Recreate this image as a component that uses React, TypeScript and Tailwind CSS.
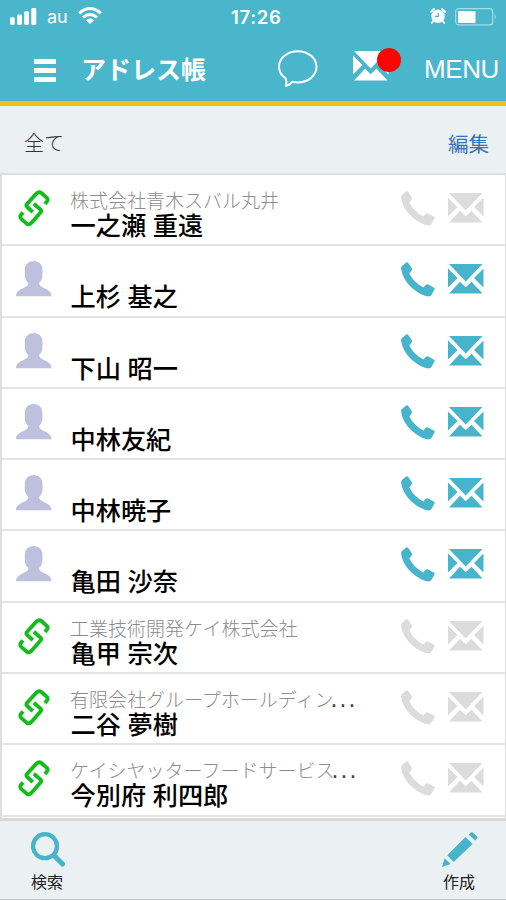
import React from "react";

type Contact = { company?: string; cut?: boolean; name: string };

const contacts: Contact[] = [
  { company: "株式会社青木スバル丸井", name: "一之瀬 重遠" },
  { name: "上杉 基之" },
  { name: "下山 昭一" },
  { name: "中林友紀" },
  { name: "中林暁子" },
  { name: "亀田 沙奈" },
  { company: "工業技術開発ケイ株式会社", name: "亀甲 宗次" },
  { company: "有限会社グループホールディン", cut: true, name: "二谷 夢樹" },
  { company: "ケイシヤッターフードサービス", cut: true, name: "今別府 利四郎" },
];

function Envelope({ className }: { className: string }) {
  return (
    <svg viewBox="0 0 36 30" fill="currentColor" className={className}>
      <path d="M1 0H34.5L17.7 17.5ZM0 4.5L9.5 14L0 23.5ZM35.5 4.5L26 14L35.5 23.5ZM1 29.5L12 17.7L17.7 23.3L23.5 17.7L34.5 29.5Z" />
    </svg>
  );
}

function Phone({ className }: { className: string }) {
  return (
    <svg viewBox="0 0 34 35" fill="currentColor" className={className}>
      <path d="M5.1.5Q6.4-.2 7.3 1L10.7 6Q11.5 7.3 10.6 8.5L8.4 11.6Q12.4 20.3 22.4 25.6L24.8 22.8Q25.8 21.8 27.1 22.4L32.9 25.6Q34.2 26.4 33.4 27.7L30.4 33Q29.6 34.3 27.8 34.4Q20 34 11 26.1Q1.5 17.4.1 6.8Q-.2 5 1.2 3.8Z" />
    </svg>
  );
}

function LinkIcon() {
  return (
    <svg viewBox="0 0 32 37" fill="none" stroke="#12bd1b" strokeWidth="3.8" strokeLinecap="butt" strokeLinejoin="round" className="h-[37px] w-8">
      <path d="M14.8 22.2L9.2 17Q7.7 15.5 9.1 13.8L18.6 3.4Q21 1.2 23.4 3L28.8 7.8Q30.4 9.6 29 11.4L27 14" />
      <path d="M15.8 13.8L22.3 19.4Q23.9 20.9 22.5 22.6L13.1 33.2Q10.9 35.3 8.6 33.6L3.2 28.8Q1.5 26.9 2.9 25L4.9 22.4" />
    </svg>
  );
}

function Person() {
  return (
    <svg viewBox="0 0 36 36" fill="#bfc0dd" className="h-9 w-9">
      <path d="M17.7 0C23 0 26.5 3.6 26.5 9V14.5C26.5 17.8 24.8 20.3 23.3 21.7C22.6 24 24.8 25.4 28 27C32.5 29.2 35.5 31 35.5 35.2H0C0 31 3 29.2 7.5 27C10.7 25.4 12.8 24 12.2 21.7C10.5 20.3 8.8 17.8 8.8 14.5V9C8.8 3.6 12.4 0 17.7 0Z" />
    </svg>
  );
}

function StatusBar() {
  return (
    <div className="grid h-[34px] grid-cols-[1fr_60px_1fr] text-white">
      <div className="flex items-start pl-[10px]">
        <svg viewBox="0 0 28 18" fill="currentColor" className="mt-2 h-[18px] w-7">
          <rect x="0" y="9.3" width="4.7" height="7.7" rx="1.4" />
          <rect x="7.2" y="6.5" width="4.8" height="10.5" rx="1.4" />
          <rect x="14.2" y="3.3" width="4.8" height="13.7" rx="1.4" />
          <rect x="21.3" y="0" width="5" height="17" rx="1.4" />
        </svg>
        <span className="ml-[9px] mt-[5px] font-['Inter',sans-serif] text-[18px] leading-6">au</span>
        <svg viewBox="0 0 24 18" fill="none" stroke="currentColor" strokeWidth="3" className="ml-[10px] mt-[7px] h-[18px] w-6">
          <path d="M1.2 6.3Q12-3.3 22.8 6.3M5 10.5Q12 4.2 19 10.5" />
          <path d="M12 17L7.9 13.2Q12 9.7 16.1 13.2Z" fill="currentColor" stroke="none" />
        </svg>
      </div>
      <span className="pl-[8px] pt-[5px] text-left font-['Inter',sans-serif] text-[18.5px] font-semibold leading-6 tracking-[0.7px] whitespace-nowrap">17:26</span>
      <div className="flex justify-end pr-2">
        <svg viewBox="0 0 16 16" className="mt-[8px] h-4 w-4">
          <circle cx="8" cy="8.3" r="6.7" fill="#fff" />
          <path d="M.8 4L4 1M12 1L15.2 4M3.3 13L1.8 15M12.7 13L14.2 15" stroke="#fff" strokeWidth="1.8" strokeLinecap="round" />
          <path d="M8.3 4.7V8.4H5" fill="none" stroke="#4ab6cc" strokeWidth="1.2" />
        </svg>
        <svg viewBox="0 0 43 18" className="ml-[9px] mt-2 h-[18px] w-[43px]">
          <rect x=".7" y=".7" width="37" height="16.2" rx="3" fill="none" stroke="#a4dce7" strokeWidth="1.2" />
          <rect x="3" y="3" width="17.5" height="12" rx="1" fill="#fff" />
          <path d="M39.7 6Q42 8.7 39.7 11.5Z" fill="#a4dce7" />
        </svg>
      </div>
    </div>
  );
}

function Header() {
  return (
    <header className="h-[106px] border-b-[5px] border-[#f0bd1d] bg-[#4ab6cc]">
      <StatusBar />
      <div className="flex h-[67px] items-start text-white">
        <div className="ml-[34px] mt-[25px] flex w-[22px] flex-col gap-[4.5px]">
          <i className="h-[4.5px] bg-white" />
          <i className="h-[4.5px] bg-white" />
          <i className="h-[4.5px] bg-white" />
        </div>
        <h1 className="ml-[25px] mt-[16px] w-[127px] whitespace-nowrap text-[25px] font-bold leading-9">アドレス帳</h1>
        <svg viewBox="0 0 40 38" fill="none" stroke="currentColor" strokeWidth="2" strokeLinejoin="round" className="ml-[70px] mt-4 h-[38px] w-10">
          <path d="M7.5 28.3C3.4 25.4 1 21.4 1 16.8C1 8.2 9.3 1.2 19.8 1.2S38.5 8.2 38.5 16.8S30.2 32.5 19.8 32.5Q17 32.5 14.4 31.8Q12.5 34.7 8 36Q9.3 32 7.5 28.3Z" />
        </svg>
        <div className="relative ml-[35px] mt-[17px]">
          <Envelope className="h-[30px] w-9" />
          <i className="absolute -top-[3px] left-[24px] h-6 w-6 rounded-full bg-[#fb0505]" />
        </div>
        <span className="ml-[35px] mt-[19px] font-['Liberation_Sans',sans-serif] text-[26px] leading-8 tracking-[-0.4px]">MENU</span>
      </div>
    </header>
  );
}

function Row({ c }: { c: Contact }) {
  return (
    <li className="flex h-[71.3px] items-start border-b-2 border-[#e3e3e3] bg-white">
      <div className="w-[68px] shrink-0 pl-[14px] pt-[15px]">
        {c.company ? <div className="pl-0.5"><LinkIcon /></div> : <Person />}
      </div>
      <div className="w-[331px] whitespace-nowrap">
        <div className="mt-[13px] flex h-6 text-[19px] font-light leading-6 text-[#8c8c8c]">
          {c.company}
          {c.cut && <span className="ml-[-3px] font-['Liberation_Sans',sans-serif] text-[25px] leading-[22px] tracking-[2px] text-[#444]">...</span>}
        </div>
        <div className="pl-[0.5px] text-[25.2px] font-medium leading-[25px] text-black [word-spacing:1px]">{c.name}</div>
      </div>
      <div className={`flex ${c.company ? "text-[#dcdcdc]" : "text-[#46b5cb]"}`}>
        <Phone className="mt-4 h-[35px] w-[34px]" />
        <Envelope className="ml-[13px] mt-[18px] h-[30px] w-9" />
      </div>
    </li>
  );
}

export default function App() {
  return (
    <div className="flex h-[900px] w-[506px] flex-col overflow-hidden bg-[#ebf0f2] font-['Noto_Sans_CJK_JP',sans-serif]">
      <Header />
      <div className="flex h-[67px] items-start justify-between pl-6 pr-[17px] pt-[21px] text-[20px] leading-8">
        <span className="font-light text-[#333]">全て</span>
        <span className="text-[20.5px] text-[#3473b7]">編集</span>
      </div>
      <ul className="h-[646px] border-b border-l-2 border-r border-t-2 border-[#dedede] bg-white">
        {contacts.map((c) => <Row key={c.name} c={c} />)}
      </ul>
      <footer className="flex h-[81px] justify-between border-b-[1.5px] border-t-2 border-b-[#c4c7c8] border-t-[#d5d7d8] pl-[31px] pr-[28px] text-[16px] leading-6 text-[#222]">
        <div className="w-9">
          <svg viewBox="0 0 36 36" fill="none" stroke="#46b5cb" className="mt-[11px] h-9 w-9">
            <circle cx="14" cy="14.2" r="12" strokeWidth="4.3" />
            <path d="M23 23.5L31.5 32" strokeWidth="5.2" strokeLinecap="round" />
          </svg>
          <div className="mt-px w-9 whitespace-nowrap">検索</div>
        </div>
        <div className="w-9">
          <svg viewBox="0 0 36 36" fill="#46b5cb" className="mt-[11px] h-9 w-9">
            <path d="M0 35L2.6 26.3L8.8 32.1ZM5.2 23.3L23.5 5L30.5 12L11.7 30ZM26.6 2.6L28 1.3Q29.8-.5 31.7 1.2L34.4 3.7Q36 5.4 34.4 7.2L33.2 8.5Z" />
          </svg>
          <div className="mt-px pl-px whitespace-nowrap">作成</div>
        </div>
      </footer>
    </div>
  );
}
